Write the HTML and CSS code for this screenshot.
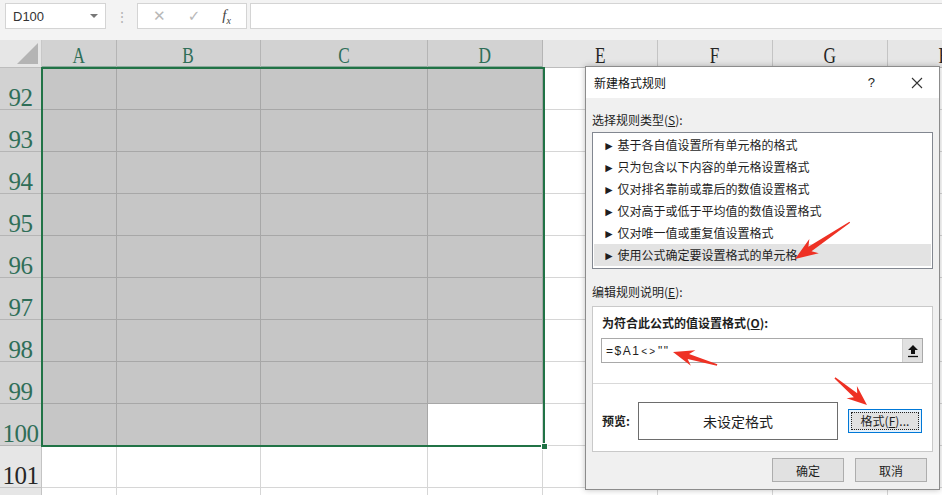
FILE: index.html
```html
<!DOCTYPE html>
<html lang="zh-CN">
<head>
    <meta charset="UTF-8">
    <title>新建格式规则</title>
    <link rel="stylesheet" href="styles.css">
</head>
<body>
    <!-- 编辑栏 -->
    <div class="formula-bar">
        <div class="name-box">
            <span>D100</span>
            <span class="drop"></span>
        </div>
        <div class="grip">⋮</div>
        <div class="fx-box">
            <span class="fx-btn">✕</span>
            <span class="fx-btn">✓</span>
            <span class="fx-btn fx">f<sub>x</sub></span>
        </div>
        <div class="formula-input"></div>
    </div>

    <!-- 工作表 -->
    <div class="sheet">
        <div class="corner"><span class="tri"></span></div>
        <div class="col hs"><span>A</span></div>
        <div class="col hs"><span>B</span></div>
        <div class="col hs"><span>C</span></div>
        <div class="col hs"><span>D</span></div>
        <div class="col"><span>E</span></div>
        <div class="col"><span>F</span></div>
        <div class="col"><span>G</span></div>
        <div class="col"><span>H</span></div>

        <div class="row hs">92</div><div class="g"></div><div class="g"></div><div class="g"></div><div class="g"></div><div class="c"></div><div class="c"></div><div class="c"></div><div class="c"></div>
        <div class="row hs">93</div><div class="g"></div><div class="g"></div><div class="g"></div><div class="g"></div><div class="c"></div><div class="c"></div><div class="c"></div><div class="c"></div>
        <div class="row hs">94</div><div class="g"></div><div class="g"></div><div class="g"></div><div class="g"></div><div class="c"></div><div class="c"></div><div class="c"></div><div class="c"></div>
        <div class="row hs">95</div><div class="g"></div><div class="g"></div><div class="g"></div><div class="g"></div><div class="c"></div><div class="c"></div><div class="c"></div><div class="c"></div>
        <div class="row hs">96</div><div class="g"></div><div class="g"></div><div class="g"></div><div class="g"></div><div class="c"></div><div class="c"></div><div class="c"></div><div class="c"></div>
        <div class="row hs">97</div><div class="g"></div><div class="g"></div><div class="g"></div><div class="g"></div><div class="c"></div><div class="c"></div><div class="c"></div><div class="c"></div>
        <div class="row hs">98</div><div class="g"></div><div class="g"></div><div class="g"></div><div class="g"></div><div class="c"></div><div class="c"></div><div class="c"></div><div class="c"></div>
        <div class="row hs">99</div><div class="g"></div><div class="g"></div><div class="g"></div><div class="g"></div><div class="c"></div><div class="c"></div><div class="c"></div><div class="c"></div>
        <div class="row hs">100</div><div class="g"></div><div class="g"></div><div class="g"></div><div class="c"></div><div class="c"></div><div class="c"></div><div class="c"></div><div class="c"></div>
        <div class="row">101</div><div class="c"></div><div class="c"></div><div class="c"></div><div class="c"></div><div class="c"></div><div class="c"></div><div class="c"></div><div class="c"></div>
        <div class="row"></div><div class="c"></div><div class="c"></div><div class="c"></div><div class="c"></div><div class="c"></div><div class="c"></div><div class="c"></div><div class="c"></div>

        <!-- 选区边框 -->
        <div class="selection"><span class="handle"></span></div>
    </div>

    <!-- 对话框 -->
    <div class="dialog">
        <div class="title-bar">
            <span class="title">新建格式规则</span>
            <span class="help">?</span>
            <svg class="close" width="12" height="12" viewBox="0 0 12 12">
                <path d="M1 1 L11 11 M11 1 L1 11" stroke="#333" stroke-width="1.1" fill="none"/>
            </svg>
        </div>
        <div class="dialog-body">
            <div class="label">选择规则类型(<u>S</u>):</div>
            <div class="rule-list">
                <div class="rule">► 基于各自值设置所有单元格的格式</div>
                <div class="rule">► 只为包含以下内容的单元格设置格式</div>
                <div class="rule">► 仅对排名靠前或靠后的数值设置格式</div>
                <div class="rule">► 仅对高于或低于平均值的数值设置格式</div>
                <div class="rule">► 仅对唯一值或重复值设置格式</div>
                <div class="rule active">► 使用公式确定要设置格式的单元格</div>
            </div>

            <div class="label second">编辑规则说明(<u>E</u>):</div>
            <div class="group">
                <div class="bold-label">为符合此公式的值设置格式(<u>O</u>):</div>
                <div class="formula-field">
                    <span class="formula-text">=$A1<span class="op">&lt;&gt;</span>""</span>
                    <span class="collapse">
                        <svg width="12" height="14" viewBox="0 0 12 14">
                            <path d="M6 1 L11 6 L8 6 L8 10 L4 10 L4 6 L1 6 Z" fill="#111"/>
                            <path d="M1 12.5 H11" stroke="#111" stroke-width="1.3"/>
                        </svg>
                    </span>
                </div>
                <div class="group-sep"></div>
                <div class="preview-row">
                    <span class="bold-label">预览:</span>
                    <div class="preview-box">未设定格式</div>
                    <div class="btn focus"><span>格式(<u>F</u>)...</span></div>
                </div>
            </div>

            <div class="actions">
                <div class="btn">确定</div>
                <div class="btn">取消</div>
            </div>
        </div>
    </div>

    <!-- 标注箭头 -->
    <svg class="marks" width="942" height="495" viewBox="0 0 942 495">
        <g transform="translate(795 259) rotate(146.1)" fill="#ee3124">
            <polygon points="0,0 -23,-8.5 -18,-2.8 -66,-0.6 -66,0.6 -18,2.8 -23,8.5"/>
        </g>
        <g transform="translate(673 352) rotate(196.5)" fill="#ee3124">
            <polygon points="0,0 -21,-8 -16,-2.6 -46,-0.8 -46,0.8 -16,2.6 -21,8"/>
        </g>
        <g transform="translate(867 405) rotate(40.2)" fill="#ee3124">
            <polygon points="0,0 -20,-8 -15,-2.6 -42,-0.7 -42,0.7 -15,2.6 -20,8"/>
        </g>
    </svg>
</body>
</html>
```

FILE: styles.css
```css
* {
    margin: 0;
    padding: 0;
    box-sizing: border-box;
}

body {
    width: 942px;
    height: 495px;
    overflow: hidden;
    position: relative;
    background: #fff;
    font-family: 'Noto Sans CJK SC', 'Noto Sans', sans-serif;
    font-size: 12px;
    color: #1e1e1e;
}

/* 编辑栏 */
.formula-bar {
    display: flex;
    align-items: flex-start;
    height: 40px;
    padding-top: 3px;
    padding-left: 5px;
    background: #f3f3f3;
}

.name-box {
    width: 101px;
    height: 26px;
    background: #fff;
    border: 1px solid #d4d4d4;
    display: flex;
    align-items: center;
    justify-content: space-between;
    padding: 0 7px 0 7px;
    font-family: 'Liberation Sans', sans-serif;
    font-size: 13px;
    color: #333;
}

.drop {
    width: 0;
    height: 0;
    border-left: 4px solid transparent;
    border-right: 4px solid transparent;
    border-top: 4px solid #777;
}

.grip {
    width: 31px;
    height: 26px;
    line-height: 26px;
    text-align: center;
    color: #b5b5b5;
    font-size: 14px;
}

.fx-box {
    width: 110px;
    height: 26px;
    background: #fff;
    border: 1px solid #d4d4d4;
    display: flex;
    align-items: center;
    justify-content: space-around;
    padding: 0 4px;
}

.fx-btn {
    color: #b8b8b8;
    font-size: 15px;
    font-family: 'DejaVu Sans', sans-serif;
}

.fx {
    color: #444;
    font-family: 'Liberation Serif', serif;
    font-style: italic;
    font-size: 15px;
}

.fx sub {
    font-size: 10px;
}

.formula-input {
    flex: 1;
    height: 26px;
    margin-left: 3px;
    background: #fff;
    border: 1px solid #d4d4d4;
    border-right: none;
}

/* 工作表 */
.sheet {
    position: relative;
    display: grid;
    grid-template-columns: 42px 75px 144px 167px 115px 115px 115px 115px 115px;
    grid-template-rows: 28px;
    grid-auto-rows: 42px;
    width: 1003px;
}

.corner {
    background: #e6e6e6;
    border-right: 1px solid #c8c8c8;
    border-bottom: 1px solid #bdbdbd;
    position: relative;
}

.tri {
    position: absolute;
    right: 3px;
    bottom: 3px;
    width: 0;
    height: 0;
    border-left: 21px solid transparent;
    border-bottom: 21px solid #b4b4b4;
}

.col {
    background: #e6e6e6;
    border-right: 1px solid #c4c4c4;
    border-bottom: 1px solid #bdbdbd;
    display: flex;
    justify-content: center;
    align-items: center;
    padding-top: 4px;
    font-family: 'Liberation Serif', serif;
    font-size: 24px;
    color: #262626;
}

.col span {
    display: inline-block;
    transform: scaleX(0.72);
}

.row {
    background: #e6e6e6;
    border-right: 1px solid #c4c4c4;
    border-bottom: 1px solid #c4c4c4;
    display: flex;
    justify-content: center;
    align-items: flex-end;
    font-family: 'Liberation Serif', serif;
    font-size: 25px;
    line-height: 22px;
    letter-spacing: -0.5px;
    color: #262626;
}

.row span {
    display: inline-block;
}

.col.hs,
.row.hs {
    background: #d2d2d2;
    color: #2f6e58;
}

.col.hs {
    border-bottom: 2px solid #8bab9c;
    border-right-color: #b5b5b5;
}

.row.hs {
    border-bottom-color: #b5b5b5;
}

.c {
    border-right: 1px solid #d6d6d6;
    border-bottom: 1px solid #d6d6d6;
}

.g {
    background: #c6c6c6;
    border-right: 1px solid #a7a7a7;
    border-bottom: 1px solid #a7a7a7;
}

.selection {
    position: absolute;
    left: 41px;
    top: 27px;
    width: 504px;
    height: 380px;
    border: 2px solid #217346;
}

.handle {
    position: absolute;
    right: -5px;
    bottom: -5px;
    width: 7px;
    height: 7px;
    background: #217346;
    border: 1px solid #fff;
}

/* 对话框 */
.dialog {
    position: absolute;
    left: 585px;
    top: 66px;
    width: 355px;
    height: 424px;
    background: #f0f0f0;
    border: 1px solid #8c8c8c;
    box-shadow: 0 0 6px rgba(0, 0, 0, 0.25);
}

.title-bar {
    height: 31px;
    background: #fff;
    display: flex;
    align-items: center;
    padding-left: 8px;
}

.title {
    flex: 1;
    font-size: 12px;
    color: #111;
}

.help {
    font-size: 13px;
    color: #222;
    margin-right: 36px;
    font-family: 'Liberation Sans', sans-serif;
}

.close {
    margin-right: 16px;
}

.dialog-body {
    padding: 0 6px;
}

.label {
    margin-top: 14px;
    line-height: 16px;
    margin-bottom: 4px;
    color: #1e1e1e;
}

.label.second {
    margin-top: 15px;
    margin-bottom: 6px;
}

.rule-list {
    height: 137px;
    background: #fff;
    border: 1px solid #828790;
    padding: 1px;
}

.rule {
    height: 22px;
    line-height: 22px;
    padding-left: 9px;
    color: #1e1e1e;
    font-size: 12px;
}

.rule.active {
    background: #e3e3e3;
}

.group {
    height: 146px;
    background: #fff;
    border: 1px solid #c9c9c9;
}

.bold-label {
    display: block;
    font-weight: bold;
    line-height: 16px;
    padding-left: 9px;
    padding-top: 8px;
    color: #1e1e1e;
}

.formula-field {
    margin: 7px 9px 0 8px;
    height: 25px;
    border: 1px solid #a9a9a9;
    display: flex;
    align-items: center;
    justify-content: space-between;
}

.formula-text {
    padding-left: 4px;
    font-size: 12px;
    letter-spacing: 1.5px;
    font-family: 'Liberation Sans', sans-serif;
}

.formula-text .op {
    font-size: 10px;
    letter-spacing: 2px;
    margin: 0 1px;
}

.collapse {
    width: 20px;
    height: 23px;
    background: #e1e1e1;
    border-left: 1px solid #cfcfcf;
    display: flex;
    align-items: center;
    justify-content: center;
}

.group-sep {
    margin-top: 20px;
    height: 1px;
    background: #d9d9d9;
}

.preview-row {
    display: flex;
    align-items: center;
    height: 66px;
    padding-top: 7px;
}

.preview-row .bold-label {
    padding-top: 0;
    width: 45px;
}

.preview-box {
    width: 200px;
    height: 38px;
    border: 1px solid #6d6d6d;
    display: flex;
    align-items: center;
    justify-content: center;
    font-size: 14px;
    color: #1e1e1e;
}

.btn {
    width: 72px;
    height: 24px;
    background: #e1e1e1;
    border: 1px solid #adadad;
    display: flex;
    align-items: center;
    justify-content: center;
    font-size: 12px;
    color: #1e1e1e;
}

.btn.focus {
    margin-left: 10px;
    width: 74px;
    border: 1px solid #0078d7;
    background: #e5f1fb;
    padding: 2px;
}

.btn.focus span {
    flex: 1;
    height: 100%;
    border: 1px dotted #222;
    background: #e1e1e1;
    display: flex;
    align-items: center;
    justify-content: center;
}

.actions {
    display: flex;
    justify-content: flex-end;
    gap: 11px;
    margin-top: 6px;
    padding-right: 6px;
}

/* 标注 */
.marks {
    position: absolute;
    left: 0;
    top: 0;
    pointer-events: none;
}
```
